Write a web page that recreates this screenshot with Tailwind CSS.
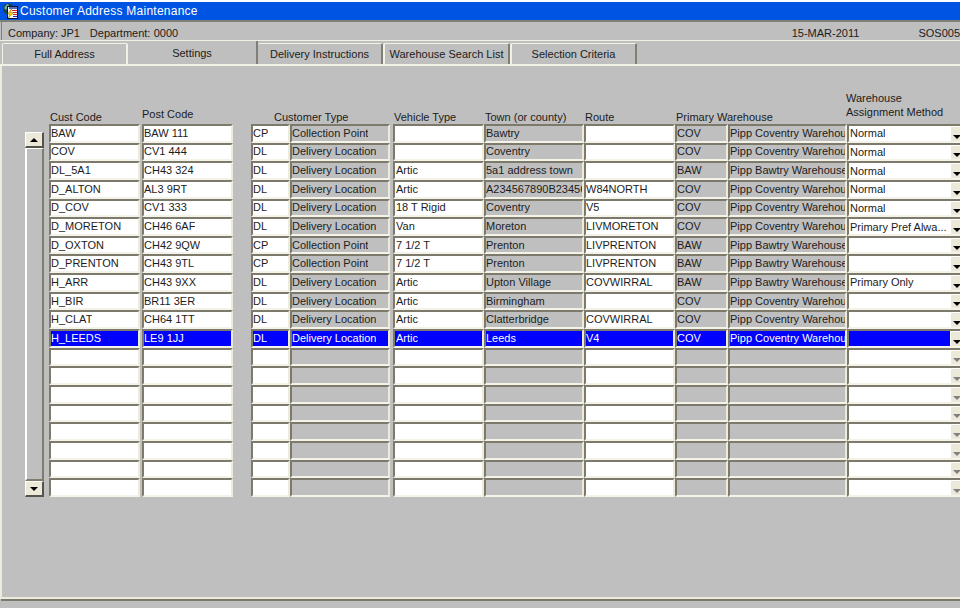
<!DOCTYPE html>
<html lang="en">
<head>
    <meta charset="UTF-8">
    <title>Customer Address Maintenance</title>
    <script src="https://cdn.jsdelivr.net/npm/@tailwindcss/browser@4"></script>
</head>
<body class="bg-[#bfbfbf]">
<div class="w-[960px] h-[608px] overflow-hidden bg-[#bfbfbf] text-[#1c1c1c] text-[11px] leading-none font-['Liberation_Sans',Arial,sans-serif] flex flex-col">
    <div class="h-[2px] shrink-0 bg-white"></div>
    <!-- title bar -->
    <div class="h-[18px] shrink-0 bg-[#0054e3] flex items-center pl-[2px] text-white text-[12px] tracking-[0.25px]">
        <svg class="w-[17px] h-[16px] mr-[1px]" viewBox="0 0 17 16">
            <circle cx="6.5" cy="6" r="5.5" fill="#20404f"/>
            <path d="M2 5l3-4 2 1-3 5z" fill="#6fb09a"/>
            <rect x="5.5" y="3.5" width="10" height="12" fill="#f6f6f6" stroke="#101030" stroke-width="1"/>
            <path d="M7 5h8" stroke="#1c2c9c" stroke-width="1.4"/>
            <path d="M10 7.5h5M11 9.5h4M11 11.5h4" stroke="#d02020" stroke-width="1"/>
            <path d="M11 13.5h4" stroke="#2030b0" stroke-width="1"/>
            <path d="M9.5 6l-4 5h2.5l-2 4.5 5.5-6H8.5z" fill="#ffd800" stroke="#705000" stroke-width="0.4"/>
        </svg>
        <span>Customer Address Maintenance</span>
    </div>
    <div class="h-[2px] shrink-0 bg-[#7f7f78]"></div>
    <!-- company line -->
    <div class="h-[18px] shrink-0 ml-[1px] border-l border-[#7f7f78] flex items-end pb-[1px] pl-[6px]">
        <span class="w-[53px]">Company:</span>
        <span class="w-[29px]">JP1</span>
        <span class="w-[64px]">Department:</span>
        <span class="w-[639px]">0000</span>
        <span class="w-[127px]">15-MAR-2011</span>
        <span>SOS005</span>
    </div>
    <!-- tabs -->
    <div class="h-[26px] shrink-0 border-t border-b-2 border-[#f2f1e6] flex pl-[2px]">
        <div class="w-[126px] mt-[2px] border-t border-l border-r-2 border-[#f2f1e6] rounded-t-[2px] flex items-center justify-center">Full Address</div>
        <div class="w-[130px] pt-[1px] border-r-2 border-[#7f7f78] flex items-center justify-center">Settings</div>
        <div class="w-[125px] mt-[2px] border-t border-[#f2f1e6] border-r-2 border-r-[#7f7f78] rounded-t-[2px] flex items-center justify-center">Delivery Instructions</div>
        <div class="w-[127px] mt-[2px] border-t border-l-2 border-[#f2f1e6] border-r-2 border-r-[#7f7f78] rounded-t-[2px] flex items-center justify-center">Warehouse Search List</div>
        <div class="w-[127px] mt-[2px] border-t border-l-2 border-[#f2f1e6] border-r-2 border-r-[#7f7f78] rounded-t-[2px] flex items-center justify-center">Selection Criteria</div>
    </div>
    <!-- content panel -->
    <div class="h-[533px] shrink-0 border-l-2 border-b-2 border-[#ecebdc] flex flex-col">
        <!-- header labels -->
        <div class="h-[58px] shrink-0 pl-[47px] flex">
            <div class="w-[93px] pt-[46px] pl-[1px]">Cust Code</div>
            <div class="w-[109px] pt-[43px]">Post Code</div>
            <div class="w-[142px] pt-[46px] pl-[23px]">Customer Type</div>
            <div class="w-[91px] pt-[46px] pl-[1px]">Vehicle Type</div>
            <div class="w-[101px] pt-[46px] pl-[1px]">Town (or county)</div>
            <div class="w-[91px] pt-[46px]">Route</div>
            <div class="w-[170px] pt-[46px]">Primary Warehouse</div>
            <div class="pt-[25px] leading-[14px]">Warehouse<br>Assignment Method</div>
        </div>
        <div class="flex">
            <!-- scrollbar -->
            <div class="w-[19px] shrink-0 ml-[23px] mr-[5px] mt-[8px] h-[365px] flex flex-col">
                <div class="h-[16px] bg-[#ece9d8] border-t border-l border-white border-r-2 border-b-2 border-r-[#55534a] border-b-[#55534a] flex items-center justify-center">
                    <div class="w-0 h-0 border-l-[4px] border-r-[4px] border-b-[4px] border-l-transparent border-r-transparent border-b-black"></div>
                </div>
                <div class="flex-1 border-l-2 border-white border-r-2 border-r-[#7f7c6e] border-t border-t-white border-b-2 border-b-[#7f7c6e]"></div>
                <div class="h-[16px] bg-[#ece9d8] border-t border-l border-white border-r-2 border-b-2 border-r-[#55534a] border-b-[#55534a] flex items-center justify-center">
                    <div class="w-0 h-0 border-l-[4px] border-r-[4px] border-t-[4px] border-l-transparent border-r-transparent border-t-black"></div>
                </div>
            </div>
            <div id="grid" class="flex flex-col"></div>
        </div>
    </div>
    <div class="h-[2px] shrink-0 bg-[#7a7a70] ml-[1px]"></div>
</div>
<script>
    const rows = [
        ['BAW','BAW 111','CP','Collection Point','','Bawtry','','COV','Pipp Coventry Warehouse','Normal'],
        ['COV','CV1 444','DL','Delivery Location','','Coventry','','COV','Pipp Coventry Warehouse','Normal'],
        ['DL_5A1','CH43 324','DL','Delivery Location','Artic','5a1 address town','','BAW','Pipp Bawtry Warehouse','Normal'],
        ['D_ALTON','AL3 9RT','DL','Delivery Location','Artic','A234567890B234567','W84NORTH','COV','Pipp Coventry Warehouse','Normal'],
        ['D_COV','CV1 333','DL','Delivery Location','18 T Rigid','Coventry','V5','COV','Pipp Coventry Warehouse','Normal'],
        ['D_MORETON','CH46 6AF','DL','Delivery Location','Van','Moreton','LIVMORETON','COV','Pipp Coventry Warehouse','Primary Pref Alwa...'],
        ['D_OXTON','CH42 9QW','CP','Collection Point','7 1/2 T','Prenton','LIVPRENTON','BAW','Pipp Bawtry Warehouse',''],
        ['D_PRENTON','CH43 9TL','CP','Collection Point','7 1/2 T','Prenton','LIVPRENTON','BAW','Pipp Bawtry Warehouse',''],
        ['H_ARR','CH43 9XX','DL','Delivery Location','Artic','Upton Village','COVWIRRAL','BAW','Pipp Bawtry Warehouse','Primary Only'],
        ['H_BIR','BR11 3ER','DL','Delivery Location','Artic','Birmingham','','COV','Pipp Coventry Warehouse',''],
        ['H_CLAT','CH64 1TT','DL','Delivery Location','Artic','Clatterbridge','COVWIRRAL','COV','Pipp Coventry Warehouse',''],
        ['H_LEEDS','LE9 1JJ','DL','Delivery Location','Artic','Leeds','V4','COV','Pipp Coventry Warehouse','']
    ];
    while (rows.length < 20) rows.push(['','','','','','','','','','']);

    // width + margin + padding classes, read-only (grey) column
    const cols = [
        ['w-[91px]', false],
        ['w-[91px] ml-[2px]', false],
        ['w-[39px] ml-[18px]', false],
        ['w-[100px]', true],
        ['w-[91px] ml-[3px] pl-[1px]', false],
        ['w-[100px]', true],
        ['w-[91px]', false],
        ['w-[53px]', true],
        ['w-[119px]', true],
        ['w-[118px] pl-[1px]', false]
    ];
    const bevel = 'h-full shrink-0 border-t-2 border-l-2 border-r-2 border-b-2 border-t-[#7d7a6c] border-l-[#7d7a6c] border-r-[#ecebdc] border-b-[#f4f3ea] flex items-center overflow-hidden whitespace-nowrap';

    let html = '';
    rows.forEach((row, r) => {
        const selected = r === 11;
        const filled = row[0] !== '';
        html += '<div class="h-[18.65px] flex">';
        row.forEach((text, c) => {
            const fill = selected ? 'bg-[#0000ff] text-white' : cols[c][1] ? 'bg-[#bfbfbf]' : 'bg-white';
            let arrow = '';
            let label = '<span class="overflow-hidden">' + text + '</span>';
            if (c === 9) {
                label = '<span class="overflow-hidden pt-[1px]">' + text + '</span>';
                const tip = filled ? 'border-t-black' : 'border-t-[#808080]';
                arrow = '<span class="ml-auto shrink-0 w-[13px] h-full bg-[#ece9d8] border-t border-l border-white flex items-end justify-center pb-[2px]"><span class="w-0 h-0 border-l-[4px] border-r-[4px] border-t-[4px] border-l-transparent border-r-transparent ' + tip + '"></span></span>';
            }
            html += '<div class="' + bevel + ' ' + cols[c][0] + ' ' + fill + '">' + label + arrow + '</div>';
        });
        html += '</div>';
    });
    document.getElementById('grid').innerHTML = html;
</script>
</body>
</html>
